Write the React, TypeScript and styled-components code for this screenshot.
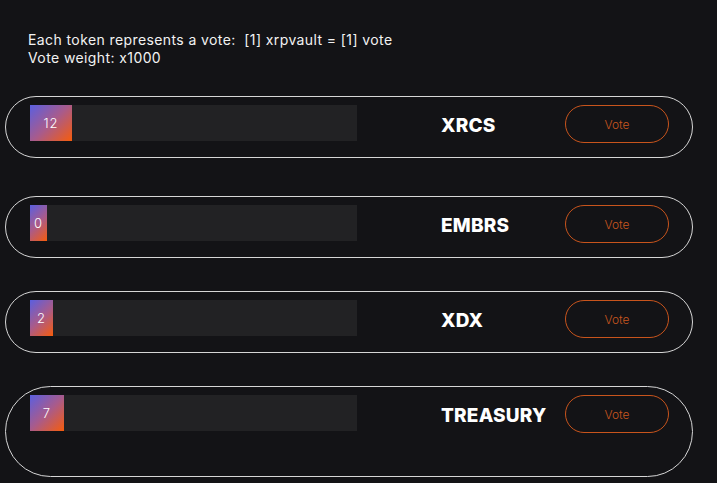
import React from 'react';
import styled, { createGlobalStyle } from 'styled-components';

interface RowProps {
  gapAfter: number;
  tall?: boolean;
}

const GlobalStyle = createGlobalStyle`
  html, body {
    margin: 0;
    padding: 0;
    background: #131316;
  }
  body {
    font-family: Inter, 'Noto Sans', sans-serif;
    color: #ffffff;
  }
`;

const Page = styled.div`
  width: 717px;
  height: 483px;
  overflow: hidden;
  box-sizing: border-box;
  padding: 31px 24px 0 5px;
  background: #131316;
`;

const Intro = styled.div`
  padding-left: 23px;
  margin-bottom: 29px;
  font-size: 14px;
  line-height: 18px;
  letter-spacing: 0.4px;
  color: #f2f2f2;
`;

const Row = styled.div<RowProps>`
  display: flex;
  align-items: flex-start;
  box-sizing: border-box;
  height: ${({ tall }) => (tall ? '91px' : '62px')};
  margin-bottom: ${({ gapAfter }) => gapAfter}px;
  padding: 8px 23px 0 24px;
  border: 1px solid #d6d6d6;
  border-radius: ${({ tall }) => (tall ? '46px' : '31px')};
`;

const Track = styled.div`
  width: 327px;
  height: 36px;
  background: #222224;
  display: flex;
`;

const Fill = styled.div`
  height: 100%;
  background: linear-gradient(135deg, #5a5fe0 0%, #a85b8c 50%, #f65c0c 100%);
  display: flex;
  align-items: center;
  justify-content: center;
  font-size: 13px;
  font-weight: 300;
  letter-spacing: 1px;
  color: #ffffff;
`;

const Name = styled.div`
  margin-left: 84px;
  width: 124px;
  height: 40px;
  display: flex;
  align-items: center;
  font-size: 19px;
  font-weight: 800;
  letter-spacing: 0.2px;
  color: #ffffff;
`;

const VoteButton = styled.button`
  width: 104px;
  height: 38px;
  box-sizing: border-box;
  border: 1px solid #c8541c;
  border-radius: 19px;
  background: transparent;
  color: #c8561f;
  font-family: Inter, 'Noto Sans', sans-serif;
  font-size: 12px;
  font-weight: 300;
  cursor: pointer;
`;

const candidates = [
  { name: 'XRCS', votes: 12, width: 42, gapAfter: 38 },
  { name: 'EMBRS', votes: 0, width: 17, gapAfter: 33 },
  { name: 'XDX', votes: 2, width: 23, gapAfter: 33 },
  { name: 'TREASURY', votes: 7, width: 34, gapAfter: 0, tall: true },
];

const App: React.FC = () => {
  return (
    <>
      <GlobalStyle />
      <Page>
        <Intro>
          <div>Each token represents a vote:&nbsp; [1] xrpvault = [1] vote</div>
          <div>Vote weight: x1000</div>
        </Intro>
        {candidates.map((c) => (
          <Row key={c.name} gapAfter={c.gapAfter} tall={c.tall}>
            <Track>
              <Fill style={{ width: `${c.width}px` }}>{c.votes}</Fill>
            </Track>
            <Name>{c.name}</Name>
            <VoteButton>Vote</VoteButton>
          </Row>
        ))}
      </Page>
    </>
  );
};

export default App;
